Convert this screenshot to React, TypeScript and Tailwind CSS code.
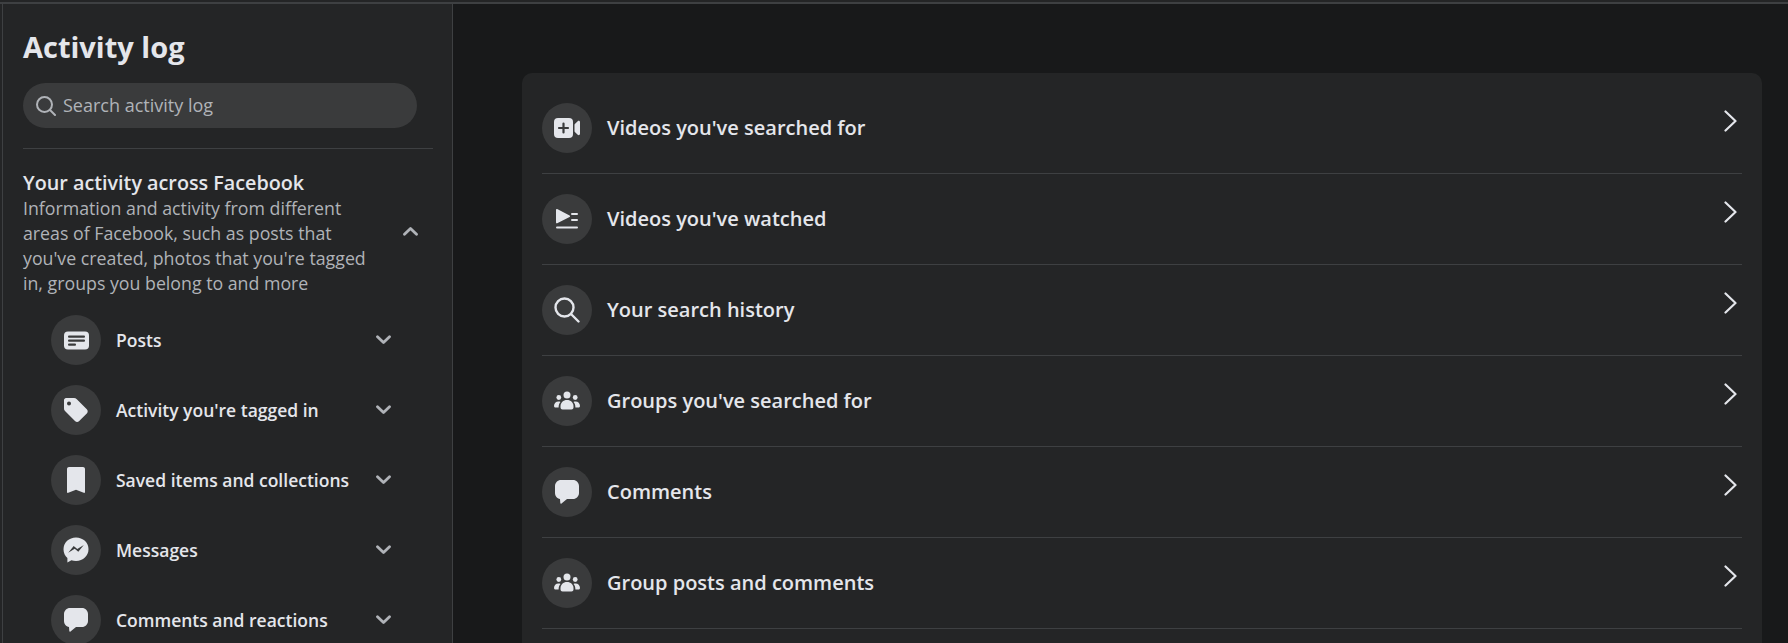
import type { ReactNode } from 'react'

const font = "font-['Open_Sans','Noto_Sans',sans-serif]"

function Chevron({ up }: { up?: boolean }) {
  return (
    <svg viewBox="0 0 15 10" className="h-[10px] w-[15px] shrink-0 text-[#b0b3b8]" fill="none" stroke="currentColor" strokeWidth="2.800" strokeLinecap="round" strokeLinejoin="round">
      <path d={up ? 'M1.500 8.300 7.500 2.500 13.500 8.300' : 'M1.500 1.700 7.500 7.500 13.500 1.700'} />
    </svg>
  )
}

function Circle({ children }: { children: ReactNode }) {
  return <div className="flex h-[50px] w-[50px] shrink-0 items-center justify-center rounded-full bg-[#3a3b3c]">{children}</div>
}

const fill = '#e4e6eb'

const PostsIcon = (
  <svg viewBox="0 0 25 19" className="h-[19px] w-[25px]">
    <rect width="25" height="18" y="0.500" rx="4" fill={fill} />
    <rect x="4" y="4.500" width="17" height="2.200" rx="1" fill="#3a3b3c" />
    <rect x="4" y="8.500" width="17" height="2.200" rx="1" fill="#3a3b3c" />
    <rect x="4" y="12.500" width="8" height="2.200" rx="1" fill="#3a3b3c" />
  </svg>
)
const TagIcon = (
  <svg viewBox="0 0 26 26" className="h-[26px] w-[26px]">
    <path fillRule="evenodd" fill={fill} d="M3 1h8c1 0 2 .4 2.800 1.200l10 10c1.200 1.200 1.200 3 0 4.200l-7.600 7.600c-1.200 1.200-3 1.200-4.200 0l-10-10C1.200 13.200 1 12.200 1 11V3c0-1 1-2 2-2Zm3 3.500a2 2 0 1 0 0 4 2 2 0 0 0 0-4Z" />
  </svg>
)
const BookmarkIcon = (
  <svg viewBox="0 0 18 26" className="h-[26px] w-[18px]">
    <path fill={fill} d="M2 0h14c1.100 0 2 .9 2 2v23c0 .8-.6 1.100-1.300.8L9 22.800l-7.700 3C.6 26.100 0 25.800 0 25V2C0 .9.900 0 2 0Z" />
  </svg>
)
const MessengerIcon = (
  <svg viewBox="0 0 26 26" className="h-[26px] w-[26px]">
    <path fill={fill} d="M13 .5C6 .5.500 5.600.500 12.200c0 3.600 1.500 6.700 3.900 8.800v4.400l4-2.200c1.500.5 3 .7 4.600.7 7 0 12.500-5.100 12.500-11.700S20 .5 13 .5Z" />
    <path fill="#3a3b3c" d="m5.200 15.800 5.500-6.900 3.600 3 6.500-4-5.500 6.900-3.600-3-6.500 4Z" />
  </svg>
)
const CommentIcon = (
  <svg viewBox="0 0 24 24" className="h-[24px] w-[24px]">
    <path fill={fill} d="M6 0h12c3.300 0 6 2.700 6 6v7c0 3.300-2.700 6-6 6h-6l-5.500 4.600c-.5.400-1.200.1-1.200-.5L5 18.900c-2.900-.4-5-2.900-5-5.900V6c0-3.300 2.700-6 6-6Z" />
  </svg>
)
const VideoPlusIcon = (
  <svg viewBox="0 0 26 20" className="h-[20px] w-[26px]">
    <rect x="0" y="0" width="19" height="20" rx="4" fill={fill} />
    <path d="M9.500 5.500v9M5 10h9" stroke="#3a3b3c" strokeWidth="2.200" strokeLinecap="round" />
    <path fill={fill} d="M20.500 7c0-.5.200-.9.600-1.200l2.600-2.600c.9-.8 2.300-.2 2.300 1v11.600c0 1.200-1.400 1.800-2.300 1l-2.600-2.600c-.4-.3-.6-.7-.6-1.200V7Z" />
  </svg>
)
const WatchedIcon = (
  <svg viewBox="0 0 22 20" className="h-[20px] w-[22px]">
    <path fill={fill} d="M0 .8C0 .2.600-.2 1.200.1l12.400 6.400c.6.300.6 1.100 0 1.400L1.200 14.300C.6 14.600 0 14.200 0 13.600V.8Z" />
    <rect x="15" y="4" width="7" height="2" rx="1" fill={fill} />
    <rect x="15" y="10" width="7" height="2" rx="1" fill={fill} />
    <rect x="0" y="17.500" width="22" height="2" rx="1" fill={fill} />
  </svg>
)
const SearchIcon = (
  <svg viewBox="0 0 26 26" className="h-[26px] w-[26px]" fill="none" stroke={fill} strokeWidth="2.400" strokeLinecap="round">
    <circle cx="10.500" cy="10.500" r="9" />
    <path d="m17.500 17.500 7 7" />
  </svg>
)
const GroupIcon = (
  <svg viewBox="0 0 26 20" className="h-[20px] w-[26px]">
    <circle cx="13" cy="4" r="3.500" fill={fill} />
    <circle cx="4.800" cy="6.500" r="2.400" fill={fill} />
    <circle cx="21.200" cy="6.500" r="2.400" fill={fill} />
    <path fill={fill} d="M6.500 15c0-3.300 2.700-6 6.500-6s6.500 2.700 6.500 6v1.500c0 1.100-.9 2-2 2h-9c-1.100 0-2-.9-2-2V15Z" />
    <path fill={fill} d="M4.600 16.500H1.500C.6 16.500 0 15.800 0 15c0-2.500 1.800-4.500 4.500-4.500.8 0 1.400.1 2 .5-1.200 1.300-1.900 3-1.900 5.500ZM21.400 16.500h3.100c.9 0 1.500-.7 1.500-1.500 0-2.500-1.800-4.500-4.500-4.500-.8 0-1.400.1-2 .5 1.200 1.300 1.900 3 1.900 5.500Z" />
  </svg>
)

const sideItems: [string, ReactNode][] = [
  ['Posts', PostsIcon],
  ["Activity you're tagged in", TagIcon],
  ['Saved items and collections', BookmarkIcon],
  ['Messages', MessengerIcon],
  ['Comments and reactions', CommentIcon],
]

const rows: [string, ReactNode][] = [
  ["Videos you've searched for", VideoPlusIcon],
  ["Videos you've watched", WatchedIcon],
  ['Your search history', SearchIcon],
  ["Groups you've searched for", GroupIcon],
  ['Comments', CommentIcon],
  ['Group posts and comments', GroupIcon],
]

export default function App() {
  return (
    <div className={`flex h-[643px] flex-col overflow-hidden bg-[#18191a] ${font}`}>
      <div className="h-[2px] shrink-0 bg-[#242526]" />
      <div className="h-[2px] shrink-0 bg-[#3e4042]" />
      <div className="flex min-h-0 flex-1">
        <div className="w-[2px] shrink-0 bg-[#242526]" />
        <aside className="w-[451px] shrink-0 border-x border-[#3e4042] bg-[#242526] pl-[20px] pr-[19px]">
          <h1 className="mt-[23px] text-[29px] leading-[40px] font-bold text-[#e4e6eb]">Activity log</h1>
          <div className="mt-[16px] flex h-[45px] w-[394px] items-center rounded-full bg-[#3a3b3c] pl-[13px]">
            <svg viewBox="0 0 20 20" className="h-[20px] w-[20px]" fill="none" stroke="#b0b3b8" strokeWidth="2" strokeLinecap="round">
              <circle cx="8.500" cy="8.500" r="7.500" />
              <path d="m14 14 5 5" />
            </svg>
            <span className="ml-[7px] text-[18px] text-[#b0b3b8]">Search activity log</span>
          </div>
          <div className="mt-[20px] h-px bg-[#3e4042]" />
          <div className="mt-[20px] flex items-center">
            <div className="w-[355px] shrink-0">
              <h2 className="text-[19.750px] leading-[27px] font-semibold text-[#e4e6eb]">Your activity across Facebook</h2>
              <p className="text-[17.750px] leading-[25px] text-[#b0b3b8]">
                Information and activity from different areas of Facebook, such as posts that you've created, photos that you're tagged in, groups you belong to and more
              </p>
            </div>
            <div className="mb-[3px] ml-[25px]"><Chevron up /></div>
          </div>
          <ul className="mt-[19px] flex flex-col gap-[20px] pl-[28px]">
            {sideItems.map(([label, icon]) => (
              <li key={label} className="flex items-center">
                <Circle>{icon}</Circle>
                <span className="ml-[15px] w-[260px] shrink-0 text-[17.500px] font-semibold text-[#e4e6eb]">{label}</span>
                <Chevron />
              </li>
            ))}
          </ul>
        </aside>
        <main className="flex min-w-0 flex-1 flex-col pt-[69px] pl-[69px] pr-[26px]">
          <div className="flex-1 overflow-hidden rounded-t-[10px] bg-[#242526] px-[20px] pt-[10px]">
            {rows.map(([label, icon]) => (
              <div key={label} className="flex h-[91px] items-center border-b border-[#3e4042]">
                <Circle>{icon}</Circle>
                <span className="ml-[15px] text-[20px] font-semibold text-[#e4e6eb]">{label}</span>
                <svg viewBox="0 0 13 22" className="mt-[27px] mr-[5px] ml-auto h-[22px] w-[13px] self-start" fill="none" stroke="#e4e6eb" strokeWidth="2.200" strokeLinecap="round" strokeLinejoin="round">
                  <path d="m1.500 1.500 10 9.500-10 9.500" />
                </svg>
              </div>
            ))}
          </div>
        </main>
      </div>
    </div>
  )
}
